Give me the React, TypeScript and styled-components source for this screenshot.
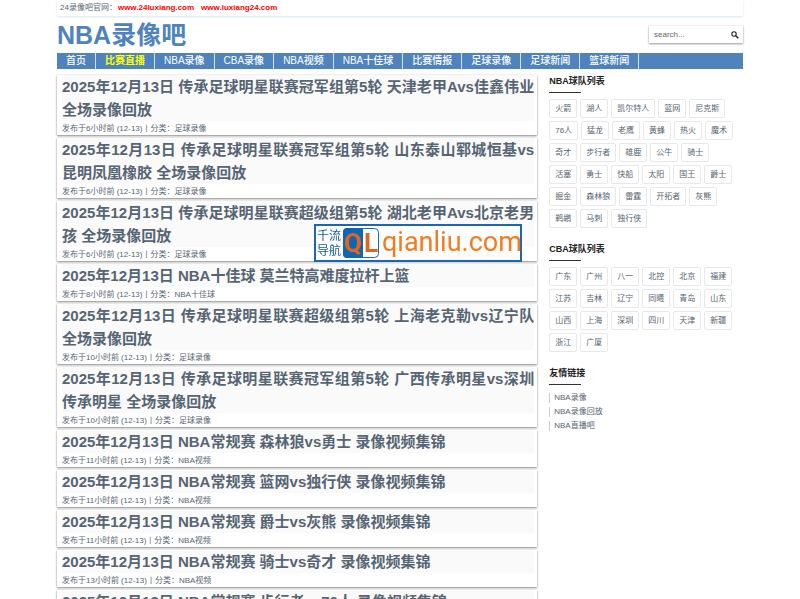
import React from "react";
import styled, { createGlobalStyle } from "styled-components";

const GlobalStyle = createGlobalStyle`
  *, *::before, *::after { box-sizing: border-box; }
  html { overflow: hidden; height: 100%; }
  body {
    margin: 0;
    height: 100%;
    overflow: hidden;
    background: #fff;
    color: #566573;
    font: 8px/14px "Liberation Sans", "Noto Sans CJK SC", sans-serif;
  }
  a { color: inherit; text-decoration: none; }
  h1, h2, ul, p { margin: 0; padding: 0; }
  ul { list-style: none; }
`;

const Page = styled.div`
  padding: 0 57px;
`;

const TopBar = styled.div`
  display: flex;
  height: 16px;
  padding: 0 3px;
  line-height: 16px;
  box-shadow: 0 1px 2px #d5eaf0;
`;

const SiteLink = styled.a`
  margin: 0 6px 0 1px;
  color: #f00;
  font-weight: bold;
`;

const Header = styled.header`
  display: flex;
  align-items: center;
  justify-content: space-between;
  height: 37px;
`;

const Logo = styled.h1`
  color: #4f83bd;
  font-size: 25px;
  line-height: 36px;
`;

const SearchForm = styled.form`
  display: flex;
  align-items: center;
  width: 94px;
  height: 17px;
  padding: 0 4px 0 5px;
  background: #fff;
  box-shadow: 0 1px 2px #999, 0 0 1px #ccc;
`;

const SearchInput = styled.input`
  flex: 1;
  min-width: 0;
  padding: 0;
  border: 0;
  outline: 0;
  background: none;
  color: #555;
  font: 8px/14px "Liberation Sans", sans-serif;
  &::placeholder { color: #666; opacity: 1; }
`;

const SearchButton = styled.button`
  display: flex;
  padding: 0;
  border: 0;
  background: none;
`;

const Nav = styled.nav`
  display: flex;
  height: 16px;
  background: #4f83bd;
`;

const NavLink = styled.a<{ $hot?: boolean }>`
  padding: 0 9px;
  border-right: 1px solid #d5e2f0;
  color: ${(p) => (p.$hot ? "#ff0" : "#fff")};
  font-size: 10px;
  font-weight: ${(p) => (p.$hot ? 700 : 500)};
  line-height: 15px;
  white-space: nowrap;
`;

const Columns = styled.div`
  display: grid;
  grid-template-columns: 70% 1fr;
  column-gap: 12px;
  align-items: start;
  padding-top: 6px;
`;

const Posts = styled.main`
  display: flex;
  flex-direction: column;
  gap: 3px;
`;

const Post = styled.article`
  padding: 0 3px 0 5px;
  background: #fff;
  box-shadow: 0 1px 2px #888, 0 0 1px #ccc;
`;

const PostTitle = styled.h2`
  background: #fafafa;
  font-size: 15px;
  line-height: 23px;
  text-align: justify;
`;

const PostMeta = styled.p`
  padding-top: 2px;
  line-height: 12px;
`;

const Sidebar = styled.aside`
  display: flex;
  flex-direction: column;
  gap: 15px;
  padding-right: 8px;
`;

const WidgetTitle = styled.h2`
  margin-bottom: 6px;
  color: #222;
  font-size: 9px;
  line-height: 13px;
  &::after {
    content: "";
    display: block;
    width: 32px;
    height: 1px;
    margin-top: 4px;
    background: #333;
  }
`;

const Tags = styled.ul`
  display: flex;
  flex-wrap: wrap;
  gap: 3px;
`;

const Tag = styled.a`
  display: block;
  padding: 0 5px;
  border: 1px solid #e8e8e8;
  border-radius: 2px;
  line-height: 17px;
`;

const FriendLinks = styled.div`
  padding-top: 2px;
`;

const FriendLink = styled.a`
  display: block;
  width: fit-content;
  height: 10px;
  margin-bottom: 4px;
  padding-left: 4px;
  border-left: 1px solid #ccc;
  line-height: 10px;
`;

const Watermark = styled.div`
  position: fixed;
  left: 314px;
  top: 224px;
  width: 208px;
  height: 38px;
  svg { display: block; }
`;

const nav = ["首页", "比赛直播", "NBA录像", "CBA录像", "NBA视频", "NBA十佳球", "比赛情报", "足球录像", "足球新闻", "篮球新闻"];

const posts = [
  ["传承足球明星联赛冠军组第5轮 天津老甲Avs佳鑫伟业 全场录像回放", "6", "足球录像"],
  ["传承足球明星联赛冠军组第5轮 山东泰山郓城恒基vs昆明凤凰橡胶 全场录像回放", "6", "足球录像"],
  ["传承足球明星联赛超级组第5轮 湖北老甲Avs北京老男孩 全场录像回放", "6", "足球录像"],
  ["NBA十佳球 莫兰特高难度拉杆上篮", "8", "NBA十佳球"],
  ["传承足球明星联赛超级组第5轮 上海老克勒vs辽宁队 全场录像回放", "10", "足球录像"],
  ["传承足球明星联赛冠军组第5轮 广西传承明星vs深圳传承明星 全场录像回放", "10", "足球录像"],
  ["NBA常规赛 森林狼vs勇士 录像视频集锦", "11", "NBA视频"],
  ["NBA常规赛 篮网vs独行侠 录像视频集锦", "11", "NBA视频"],
  ["NBA常规赛 爵士vs灰熊 录像视频集锦", "11", "NBA视频"],
  ["NBA常规赛 骑士vs奇才 录像视频集锦", "13", "NBA视频"],
  ["NBA常规赛 步行者vs76人 录像视频集锦", "13", "NBA视频"],
];

const nbaTeams = "火箭 湖人 凯尔特人 篮网 尼克斯 76人 猛龙 老鹰 黄蜂 热火 魔术 奇才 步行者 雄鹿 公牛 骑士 活塞 勇士 快船 太阳 国王 爵士 掘金 森林狼 雷霆 开拓者 灰熊 鹈鹕 马刺 独行侠".split(" ");
const cbaTeams = "广东 广州 八一 北控 北京 福建 江苏 吉林 辽宁 同曦 青岛 山东 山西 上海 深圳 四川 天津 新疆 浙江 广厦".split(" ");
const friends = ["NBA录像", "NBA录像回放", "NBA直播吧"];

function TeamWidget({ title, teams }: { title: string; teams: string[] }) {
  return (
    <section>
      <WidgetTitle>{title}</WidgetTitle>
      <Tags>
        {teams.map((t) => (
          <li key={t}><Tag href="#">{t}</Tag></li>
        ))}
      </Tags>
    </section>
  );
}

export default function App() {
  return (
    <>
      <GlobalStyle />
      <Page>
        <TopBar>
          <span>24录像吧官网：</span>
          <SiteLink href="#">www.24luxiang.com</SiteLink>
          <SiteLink href="#">www.luxiang24.com</SiteLink>
        </TopBar>
        <Header>
          <Logo><a href="#">NBA录像吧</a></Logo>
          <SearchForm role="search" onSubmit={(e) => e.preventDefault()}>
            <SearchInput type="text" placeholder="search..." aria-label="search" />
            <SearchButton type="submit" aria-label="search">
              <svg width="8" height="8" viewBox="0 0 8 8" fill="none" stroke="#222">
                <circle cx="3" cy="3" r="2.2" strokeWidth="1.1" />
                <path d="M4.7 4.7 7.3 7.3" strokeWidth="1.5" />
              </svg>
            </SearchButton>
          </SearchForm>
        </Header>
        <Nav>
          {nav.map((n, i) => (
            <NavLink key={n} href="#" $hot={i === 1}>{n}</NavLink>
          ))}
        </Nav>
        <Columns>
          <Posts>
            {posts.map(([title, hours, category]) => (
              <Post key={title}>
                <PostTitle><a href="#">{`2025年12月13日 ${title}`}</a></PostTitle>
                <PostMeta>{`发布于${hours}小时前 (12-13)丨分类：`}<a href="#">{category}</a></PostMeta>
              </Post>
            ))}
          </Posts>
          <Sidebar>
            <TeamWidget title="NBA球队列表" teams={nbaTeams} />
            <TeamWidget title="CBA球队列表" teams={cbaTeams} />
            <section>
              <WidgetTitle>友情链接</WidgetTitle>
              <FriendLinks>
                {friends.map((f) => (
                  <FriendLink key={f} href="#">{f}</FriendLink>
                ))}
              </FriendLinks>
            </section>
          </Sidebar>
        </Columns>
      </Page>
      <Watermark>
        <svg width="208" height="38" viewBox="0 0 208 38">
          <rect x="1" y="1" width="206" height="36" fill="#fcfcfc" stroke="#1c68b0" strokeWidth="2" />
          <g fill="#175a94" fontFamily="'Noto Sans CJK SC', sans-serif" fontSize="12">
            <text x="3" y="16">千流</text>
            <text x="3" y="31">导航</text>
          </g>
          <rect x="29.5" y="4.5" width="35" height="29" rx="4" fill="#fff" stroke="#1c68b0" />
          <path d="M49 4H33a4 4 0 0 0-4 4v22a4 4 0 0 0 4 4h16z" fill="#0f66b4" />
          <g fill="#e0651f" fontFamily="Roboto, sans-serif" fontWeight="700" fontSize="26">
            <text x="30" y="28">Q</text>
            <text x="50" y="28">L</text>
          </g>
          <text x="68" y="27" fill="#f07d22" fontFamily="Roboto, sans-serif" fontSize="27">qianliu.com</text>
        </svg>
      </Watermark>
    </>
  );
}
